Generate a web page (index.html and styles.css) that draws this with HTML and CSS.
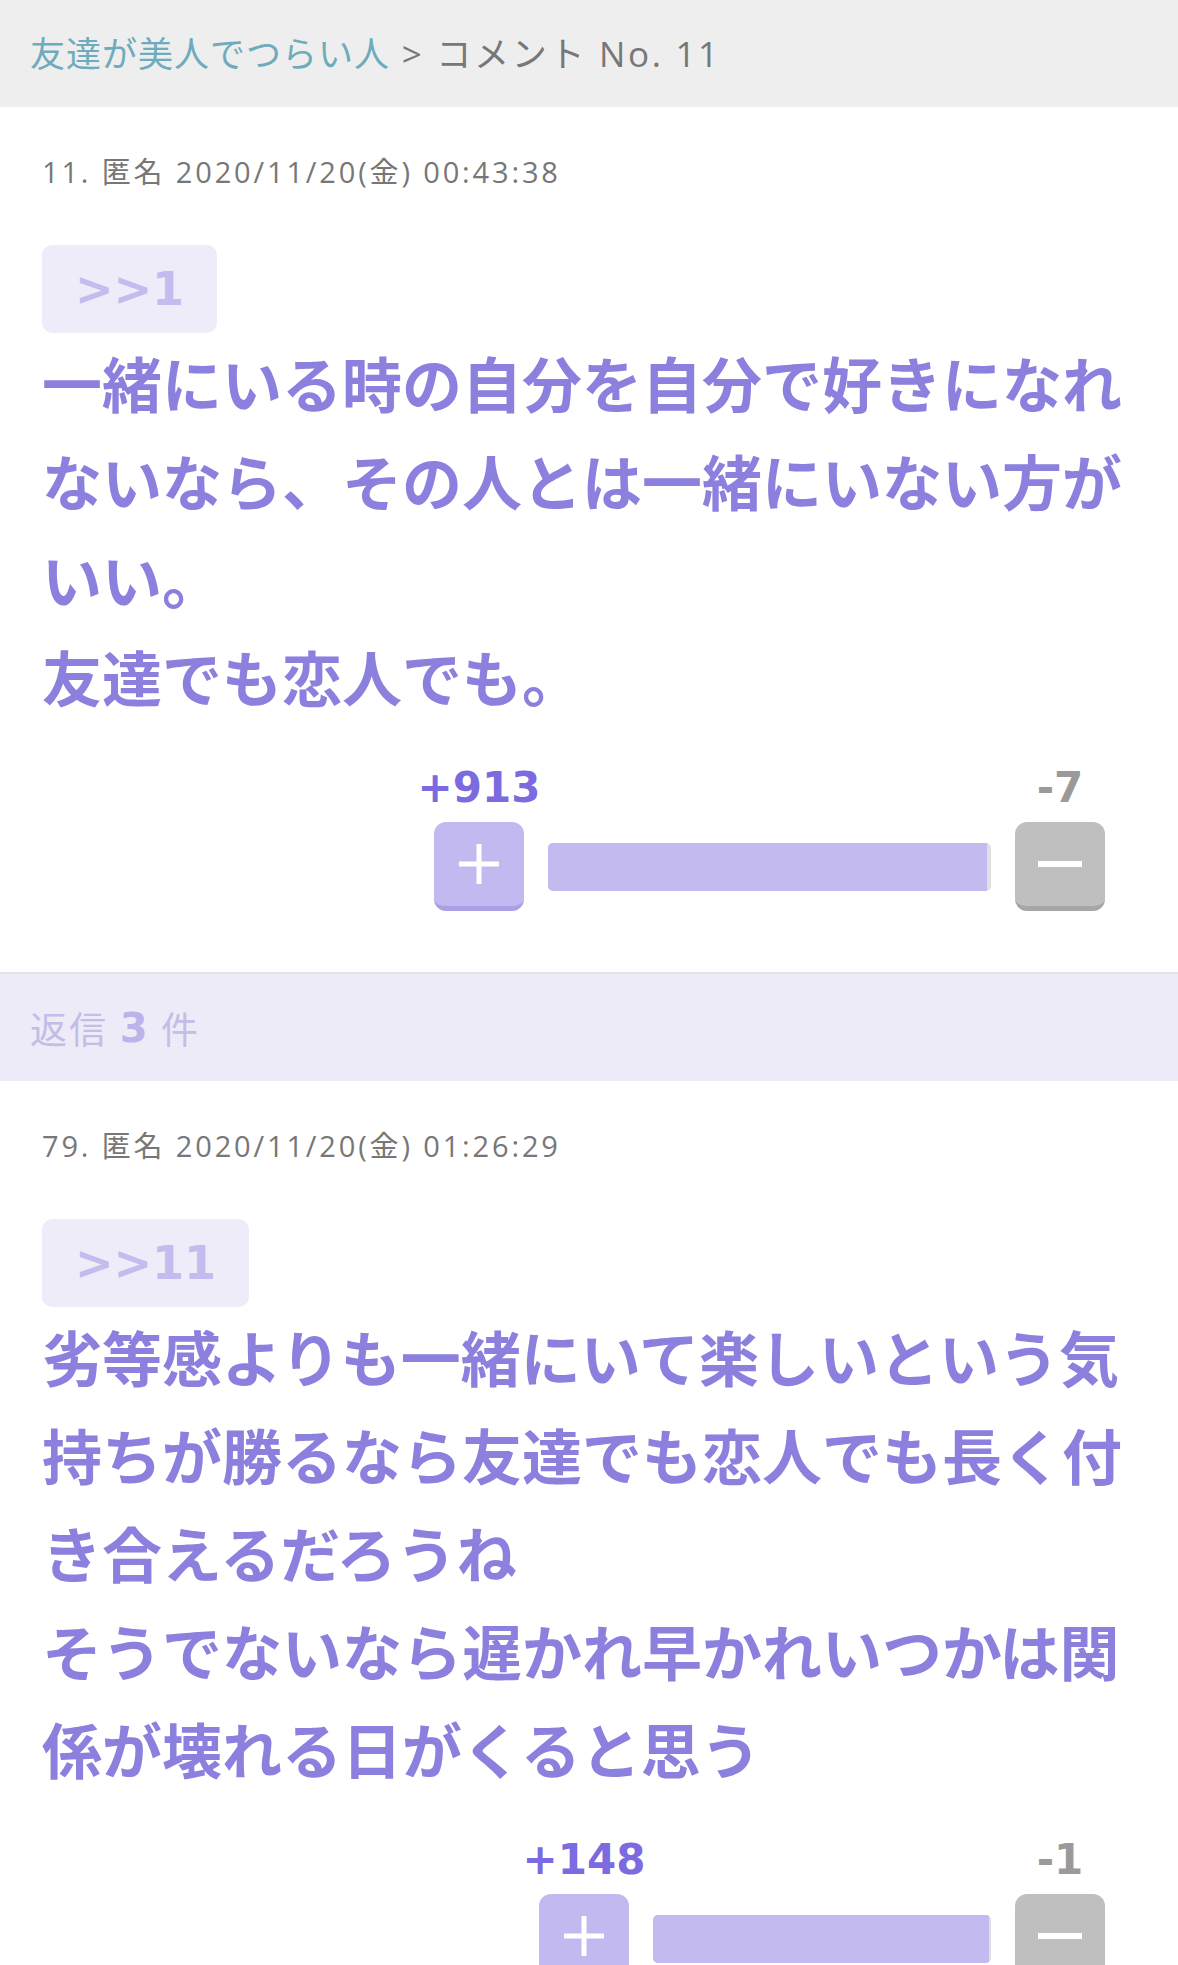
FILE: index.html
```html
<!DOCTYPE html>
<html lang="ja">

<head>
    <meta charset="UTF-8">
    <meta name="viewport" content="width=device-width, initial-scale=1.0">
    <title>コメント No. 11</title>
    <link rel="stylesheet" href="styles.css">
</head>

<body>
    <div class="crumb">
        <a href="#" class="crumb-link">友達が美人でつらい人</a><span class="crumb-here"> &gt; コメント No. 11</span>
    </div>

    <div class="comment">
        <div class="meta">11. 匿名 2020/11/20(金) 00:43:38</div>
        <span class="anchor">&gt;&gt;1</span>
        <p class="body">一緒にいる時の自分を自分で好きになれないなら、その人とは一緒にいない方がいい。<br>友達でも恋人でも。</p>
        <div class="vote">
            <div class="count count-plus">+913</div>
            <div></div>
            <div class="count count-minus">-7</div>
            <button class="btn btn-plus">
                <svg width="40" height="40" viewBox="0 0 40 40"><rect x="17.5" y="0" width="5" height="40" fill="#fff"/><rect x="0" y="17.5" width="40" height="5" fill="#fff"/></svg>
            </button>
            <div class="bar" style="width: 443px;"><div class="fill" style="width: 99.2%;"></div></div>
            <button class="btn btn-minus">
                <svg width="44" height="8" viewBox="0 0 44 8"><rect x="0" y="1" width="44" height="6" fill="#fff"/></svg>
            </button>
        </div>
    </div>

    <div class="replies">返信 <b>3</b> 件</div>

    <div class="comment">
        <div class="meta">79. 匿名 2020/11/20(金) 01:26:29</div>
        <span class="anchor">&gt;&gt;11</span>
        <p class="body">劣等感よりも一緒にいて楽しいという気持ちが勝るなら友達でも恋人でも長く付き合えるだろうね<br>そうでないなら遅かれ早かれいつかは関係が壊れる日がくると思う</p>
        <div class="vote">
            <div class="count count-plus">+148</div>
            <div></div>
            <div class="count count-minus">-1</div>
            <button class="btn btn-plus">
                <svg width="40" height="40" viewBox="0 0 40 40"><rect x="17.5" y="0" width="5" height="40" fill="#fff"/><rect x="0" y="17.5" width="40" height="5" fill="#fff"/></svg>
            </button>
            <div class="bar" style="width: 338px;"><div class="fill" style="width: 99.3%;"></div></div>
            <button class="btn btn-minus">
                <svg width="44" height="8" viewBox="0 0 44 8"><rect x="0" y="1" width="44" height="6" fill="#fff"/></svg>
            </button>
        </div>
    </div>
</body>

</html>
```

FILE: styles.css
```css
body {
    margin: 0;
    padding: 0;
    background-color: #fff;
    font-family: "Open Sans", "Noto Sans CJK JP", sans-serif;
    color: #777;
}

.crumb {
    height: 107px;
    line-height: 107px;
    padding: 0 30px;
    background-color: #eeeeee;
    font-size: 35px;
    letter-spacing: 1px;
    color: #777;
    white-space: nowrap;
}

.crumb-link {
    color: #6eabbc;
    text-decoration: none;
}

.crumb-here {
    white-space: pre;
    letter-spacing: 2.7px;
}

.comment {
    padding: 45px 42px 61px;
    display: flex;
    flex-direction: column;
    align-items: flex-start;
}

.meta {
    font-size: 29px;
    line-height: 40px;
    letter-spacing: 2.85px;
    color: #777;
    margin-bottom: 53px;
}

.anchor {
    display: flex;
    align-items: center;
    height: 88px;
    padding: 0 33px;
    box-sizing: border-box;
    border-radius: 10px;
    background-color: #eeecf9;
    color: #c3bcee;
    font-family: "DejaVu Sans", sans-serif;
    font-weight: bold;
    font-size: 46px;
}

.body {
    margin: 0;
    font-family: "Noto Sans CJK JP", sans-serif;
    font-size: 60px;
    line-height: 98px;
    font-weight: bold;
    color: #8b80dd;
}

.vote {
    align-self: flex-end;
    margin-top: 38px;
    margin-right: 31px;
    display: grid;
    grid-template-columns: 90px auto 90px;
    column-gap: 24px;
    row-gap: 9px;
    align-items: center;
}

.count {
    display: flex;
    justify-content: center;
    font-family: "DejaVu Sans", sans-serif;
    font-weight: bold;
    font-size: 42px;
    line-height: 50px;
    white-space: nowrap;
}

.count-plus {
    color: #7b6ae0;
}

.count-minus {
    color: #9a9a9a;
}

.btn {
    width: 90px;
    height: 89px;
    border: none;
    border-radius: 12px;
    padding: 0;
    display: flex;
    justify-content: center;
    align-items: center;
    cursor: pointer;
}

.btn-plus {
    background-color: #c2b9f0;
    border-bottom: 5px solid #aaa0e4;
}

.btn-minus {
    background-color: #bfbfbf;
    border-bottom: 5px solid #a6a6a6;
}

.bar {
    height: 48px;
    border-radius: 5px;
    background-color: #e0e0e0;
    overflow: hidden;
}

.fill {
    height: 100%;
    background-color: #c3baf0;
}

.replies {
    height: 109px;
    box-sizing: border-box;
    padding: 0 30px;
    display: flex;
    align-items: center;
    border-top: 2px solid #e3e3e3;
    background-color: #edebf7;
    color: #c4bde6;
    font-size: 37px;
    letter-spacing: 2px;
    white-space: pre;
}

.replies b {
    font-family: "DejaVu Sans", sans-serif;
    color: #bcb3ea;
    font-size: 40px;
}
```
